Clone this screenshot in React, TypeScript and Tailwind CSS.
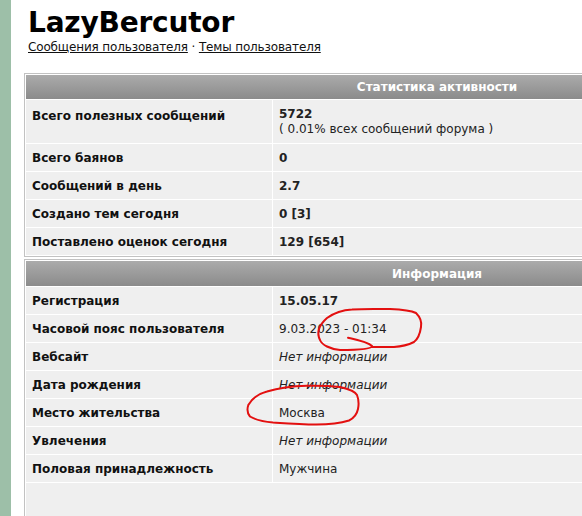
import React from "react";

const font = { fontFamily: '"DejaVu Sans", Verdana, sans-serif' };

function Row({ label, children, tall }: { label: string; children: React.ReactNode; tall?: boolean }) {
  return (
    <>
      <div className={`bg-[#efefef] px-[6px] font-bold text-[12px] text-[#111] flex ${tall ? "h-[43px] items-start pt-[7px]" : "h-[27px] items-center"}`}>
        {label}
      </div>
      <div className={`bg-[#efefef] px-[6px] text-[12px] text-[#222] ${tall ? "h-[43px] pt-[7px] leading-[15px]" : "h-[27px] flex items-center"}`}>
        {children}
      </div>
    </>
  );
}

function Header({ title }: { title: string }) {
  return (
    <div className="col-span-2 h-[24px] flex items-center justify-center bg-gradient-to-b from-[#ababab] to-[#8b8b8b] text-white font-bold text-[12px]">
      {title}
    </div>
  );
}

export default function App() {
  return (
    <div className="relative w-[582px] h-[516px] overflow-hidden bg-white flex" style={font}>
      <div className="w-[11px] shrink-0 bg-[#9dbfa8]" />
      <div className="pl-[13px] pt-[6px] shrink-0">
        <div className="pl-[4px]">
          <div className="text-[28px] font-bold leading-[34px] text-black tracking-[-0.2px]">LazyBercutor</div>
          <div className="text-[12px] leading-[15px] text-[#111] tracking-[-0.15px]">
            <span className="underline">Сообщения пользователя</span> · <span className="underline">Темы пользователя</span>
          </div>
        </div>
        <div className="mt-[18px] w-[826px] border border-[#c2c2c2] p-px">
          <div className="grid grid-cols-[246px_1fr] gap-px bg-white">
            <Header title="Статистика активности" />
            <Row label="Всего полезных сообщений" tall>
              <div className="font-bold">5722</div>
              <div>( 0.01% всех сообщений форума )</div>
            </Row>
            <Row label="Всего баянов"><b>0</b></Row>
            <Row label="Сообщений в день"><b>2.7</b></Row>
            <Row label="Создано тем сегодня"><b>0 [3]</b></Row>
            <Row label="Поставлено оценок сегодня"><b>129 [654]</b></Row>
          </div>
        </div>
        <div className="mt-[2px] w-[826px] border border-[#c2c2c2] p-px">
          <div className="grid grid-cols-[246px_1fr] gap-px bg-white">
            <div className="col-span-2 h-[25px] flex items-center justify-center bg-gradient-to-b from-[#ababab] to-[#8b8b8b] text-white font-bold text-[12px]">
              Информация
            </div>
            <Row label="Регистрация"><b>15.05.17</b></Row>
            <Row label="Часовой пояс пользователя">9.03.2023 - 01:34</Row>
            <Row label="Вебсайт"><i>Нет информации</i></Row>
            <Row label="Дата рождения"><i>Нет информации</i></Row>
            <Row label="Место жительства">Москва</Row>
            <Row label="Увлечения"><i>Нет информации</i></Row>
            <Row label="Половая принадлежность">Мужчина</Row>
            <div className="col-span-2 h-[60px] bg-[#efefef]" />
          </div>
        </div>
      </div>
      <svg className="absolute left-0 top-0 pointer-events-none" width="582" height="516" viewBox="0 0 582 516" fill="none">
        <path
          d="M348 337.7 C358 340 368 342 372 346 C372 349 360 350 340 350 C330 349 322 345 320 340 C317 334 318 326 327 318 C334 313 342 310 352 309.5 C365 308.5 378 309 390 309 C402 309.5 412 311 416 313 C420 317 422 322 421 327 C420 334 418 339 414 342 C408 345 402 346.5 394 347 L372 347"
          stroke="#e31010"
          strokeWidth="2"
          strokeLinecap="round"
          strokeLinejoin="round"
        />
        <path
          d="M248.3 405 C252 398 258 394 267 391.5 C280 387.5 294 386 307 385.7 C320 385.5 332 386 340 387 C349 389 355 391 357 395 C359 400 359 404 358 409 C357 414 354 418 349 420.5 C338 424 328 424.5 316 424.5 C302 424.5 288 423.5 273 422.5 C262 421.5 255 419.5 250 416.5 C247 413 247 409 248.3 405"
          stroke="#e31010"
          strokeWidth="2"
          strokeLinecap="round"
          strokeLinejoin="round"
        />
      </svg>
    </div>
  );
}
